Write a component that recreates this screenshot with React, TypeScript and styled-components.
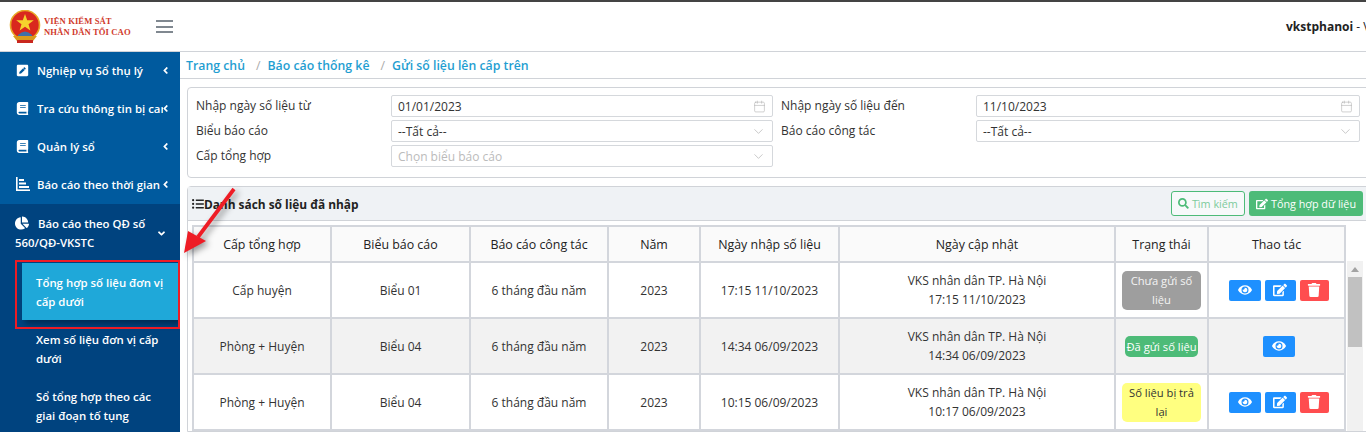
import React from 'react'
import styled, { createGlobalStyle } from 'styled-components'
import { FaAngleDown, FaAngleLeft, FaBook, FaChartPie, FaEdit, FaEye, FaPenSquare, FaSearch, FaTrash, FaListUl } from 'react-icons/fa'
import { Calendar, ChevronDown } from 'lucide-react'

const GlobalStyle = createGlobalStyle`
  html, body {
    margin: 0;
    padding: 0;
    background: #fff;
    overflow: hidden;
  }
  * { box-sizing: border-box; }
`

const App = () => {
  return (
    <Page>
      <GlobalStyle />
      <Header>
        <Brand>
          <Emblem />
          <BrandText>
            <span>VIỆN KIỂM SÁT</span>
            <span>NHÂN DÂN TỐI CAO</span>
          </BrandText>
          <Burger><i /><i /><i /></Burger>
        </Brand>
        <UserName><b>vkstphanoi</b> - VKS nhân dân TP. Hà Nội</UserName>
      </Header>

      <Body>
        <Sidebar>
          {MENU.map(item => (
            <MenuItem key={item.text}>
              <MenuIcon>{item.icon}</MenuIcon>
              <MenuText>{item.text}</MenuText>
              <MenuCaret><FaAngleLeft /></MenuCaret>
            </MenuItem>
          ))}
          <ActiveGroup>
            <GroupTitle>
              <GroupIcon><FaChartPie /></GroupIcon>
              Báo cáo theo QĐ số 560/QĐ-VKSTC
              <GroupCaret><FaAngleDown /></GroupCaret>
            </GroupTitle>
            <SubItem $active>Tổng hợp số liệu đơn vị cấp dưới</SubItem>
            <SubItem>Xem số liệu đơn vị cấp dưới</SubItem>
            <SubItem>Sổ tổng hợp theo các giai đoạn tố tụng</SubItem>
          </ActiveGroup>
        </Sidebar>

        <Main>
          <Breadcrumb>
            <Crumb>Trang chủ</Crumb>
            <Slash>/</Slash>
            <Crumb>Báo cáo thống kê</Crumb>
            <Slash>/</Slash>
            <Crumb>Gửi số liệu lên cấp trên</Crumb>
          </Breadcrumb>

          <FilterCard>
            <FieldLabel>Nhập ngày số liệu từ</FieldLabel>
            <Field>01/01/2023<Calendar size={13} strokeWidth={1} /></Field>
            <FieldLabel $indent>Nhập ngày số liệu đến</FieldLabel>
            <Field>11/10/2023<Calendar size={13} strokeWidth={1} /></Field>
            <FieldLabel>Biểu báo cáo</FieldLabel>
            <Field>--Tất cả--<ChevronDown size={15} strokeWidth={1} /></Field>
            <FieldLabel $indent>Báo cáo công tác</FieldLabel>
            <Field>--Tất cả--<ChevronDown size={15} strokeWidth={1} /></Field>
            <FieldLabel>Cấp tổng hợp</FieldLabel>
            <Field $placeholder>Chọn biểu báo cáo<ChevronDown size={15} strokeWidth={1} /></Field>
          </FilterCard>

          <Panel>
            <PanelHeader>
              <PanelTitle><FaListUl />Danh sách số liệu đã nhập</PanelTitle>
              <PanelActions>
                <OutlineButton><FaSearch />Tìm kiếm</OutlineButton>
                <GreenButton><FaEdit />Tổng hợp dữ liệu</GreenButton>
              </PanelActions>
            </PanelHeader>
            <TableArea>
              <Table>
                <colgroup>
                  {COLUMNS.map(col => <col key={col.title} style={{ width: col.width }} />)}
                </colgroup>
                <thead>
                  <tr>
                    {COLUMNS.map(col => <th key={col.title}>{col.title}</th>)}
                  </tr>
                </thead>
                <tbody>
                  {ROWS.map(row => (
                    <BodyRow key={row.created} $even={row.even}>
                      <td>{row.level}</td>
                      <td>{row.form}</td>
                      <td>{row.report}</td>
                      <td>2023</td>
                      <td>{row.created}</td>
                      <td>VKS nhân dân TP. Hà Nội<br />{row.updated}</td>
                      <td><Status $kind={row.kind}>{row.status}</Status></td>
                      <td>
                        <Actions>
                          <ActionButton $color="#1e90ff" $width={32}><FaEye /></ActionButton>
                          {row.kind !== 'sent' && (
                            <>
                              <ActionButton $color="#1e90ff" $width={31}><FaEdit /></ActionButton>
                              <ActionButton $color="#ff4d4f" $width={29}><FaTrash /></ActionButton>
                            </>
                          )}
                        </Actions>
                      </td>
                    </BodyRow>
                  ))}
                </tbody>
              </Table>
              <ScrollTrack>
                <ScrollArrow />
                <ScrollThumb />
              </ScrollTrack>
            </TableArea>
          </Panel>
        </Main>
      </Body>

      <Highlight />
      <Arrow viewBox="0 0 60 76" width="60" height="76">
        <path d="M53 4 L17 52" stroke="#ee1c25" strokeWidth="3.8" fill="none" />
        <path d="M3 68 L7 46 L25 56 Z" fill="#ee1c25" />
      </Arrow>
    </Page>
  )
}

const Emblem = () => (
  <svg width="32" height="34" viewBox="0 0 32 34">
    <circle cx="16" cy="15" r="14.5" fill="#d9281e" />
    <circle cx="16" cy="15" r="14.5" fill="none" stroke="#e8a825" strokeWidth="1.6" />
    <path d="M16 4 L18.2 10.2 L24.8 10.2 L19.5 14.2 L21.4 20.4 L16 16.7 L10.6 20.4 L12.5 14.2 L7.2 10.2 L13.8 10.2 Z" fill="#f6d32d" />
    <path d="M9 25 Q16 18 23 25 L23 27 L9 27 Z" fill="#3f6fa8" />
    <path d="M4 26 H28 L24 31 H8 Z" fill="#d99a1c" />
    <rect x="8" y="30" width="16" height="3" fill="#c9271e" />
  </svg>
)

const BarsIcon = () => (
  <svg width="14" height="14" viewBox="0 0 14 14" fill="#fff">
    <rect x="0" y="0" width="1.6" height="14" />
    <rect x="0" y="12.4" width="14" height="1.6" />
    <rect x="3" y="2" width="5" height="2" />
    <rect x="3" y="5.5" width="7" height="2" />
    <rect x="3" y="9" width="10" height="2" />
  </svg>
)

export default App

const Page = styled.div`
  position: relative;
  width: 1366px;
  height: 432px;
  overflow: hidden;
  display: flex;
  flex-direction: column;
  font-family: "Open Sans", "Noto Sans", sans-serif;
  font-size: 12px;
  color: #333;
  border-top: 2px solid #444;
`

const Header = styled.header`
  flex: none;
  height: 50px;
  display: flex;
  align-items: center;
  border-bottom: 1px solid #d0d3d8;
  white-space: nowrap;
`

const Brand = styled.div`
  width: 180px;
  flex: none;
  display: flex;
  align-items: center;
  padding-left: 9px;
  gap: 3px;
`

const BrandText = styled.div`
  display: flex;
  flex-direction: column;
  font-family: "Liberation Serif", serif;
  font-size: 8.6px;
  font-weight: bold;
  line-height: 11px;
  color: #d0392b;
  letter-spacing: 0.1px;
`

const Burger = styled.div`
  margin-left: 22px;
  width: 17px;
  display: flex;
  flex-direction: column;
  gap: 3.5px;

  i {
    display: block;
    height: 2px;
    background: #808890;
  }
`

const UserName = styled.div`
  flex: none;
  margin-left: 1106px;
  font-size: 12px;
  color: #222;
`

const Body = styled.div`
  flex: 1;
  min-height: 0;
  display: flex;
`

const Sidebar = styled.nav`
  width: 180px;
  flex: none;
  background: #005a9e;
  color: #fff;
  font-weight: 600;
  font-size: 11.4px;
  overflow: hidden;
`

const MenuItem = styled.div`
  height: 38px;
  display: flex;
  align-items: center;
  padding: 0 0 2px 16px;
  white-space: nowrap;
`

const MenuIcon = styled.span`
  width: 21px;
  flex: none;
  display: flex;
  font-size: 13px;
`

const MenuText = styled.span`
  width: 126px;
  flex: none;
  overflow: hidden;
`

const MenuCaret = styled.span`
  display: flex;
  font-size: 11px;
  margin-left: -3px;
`

const ActiveGroup = styled.div`
  background: #00437f;
  height: 230px;
`

const GroupTitle = styled.div`
  position: relative;
  padding: 11px 30px 11px 15px;
  line-height: 18px;
`

const GroupIcon = styled.span`
  display: inline-block;
  width: 23px;
  font-size: 14px;
  vertical-align: -2px;
`

const GroupCaret = styled.span`
  position: absolute;
  right: 13px;
  top: 22px;
  font-size: 11px;
`

const SubItem = styled.div<{ $active?: boolean }>`
  margin-left: 22px;
  width: 156px;
  height: 57px;
  display: flex;
  align-items: center;
  padding: 0 8px 0 14px;
  line-height: 19px;
  background: ${p => (p.$active ? '#1fa8d9' : 'transparent')};
  box-shadow: ${p => (p.$active ? '3px 4px 6px rgba(0, 0, 0, 0.35)' : 'none')};
`

const Main = styled.main`
  flex: 1;
  min-width: 0;
  overflow: hidden;
`

const Breadcrumb = styled.div`
  height: 27px;
  display: flex;
  align-items: center;
  padding-left: 6px;
  border-bottom: 1px solid #d0d3d8;
  font-size: 12.3px;
  font-weight: 600;
`

const Crumb = styled.span`
  color: #1f9ed1;
`

const Slash = styled.span`
  color: #aaa;
  font-weight: 400;
  margin: 0 7px 0 11px;
`

const FilterCard = styled.section`
  width: 1190px;
  height: 91px;
  margin: 8px 0 0 7px;
  padding: 7px 0 0 8px;
  border: 1px solid #d0d3d8;
  border-radius: 4px;
  display: grid;
  grid-template-columns: 195px 382px 203px 384px;
  grid-auto-rows: 22px;
  row-gap: 3px;
`

const FieldLabel = styled.label<{ $indent?: boolean }>`
  line-height: 22px;
  padding-left: ${p => (p.$indent ? '8px' : '0')};
`

const Field = styled.div<{ $placeholder?: boolean }>`
  display: flex;
  align-items: center;
  justify-content: space-between;
  padding: 0 6px;
  border: 1px solid #d5d8dc;
  border-radius: 2px;
  color: ${p => (p.$placeholder ? '#bbb' : '#333')};

  svg {
    color: #aaa;
  }
`

const Panel = styled.section`
  width: 1190px;
  margin: 8px 0 0 7px;
  border: 1px solid #d0d3d8;
  border-radius: 4px 4px 0 0;
`

const PanelHeader = styled.div`
  height: 34px;
  display: flex;
  align-items: center;
  justify-content: space-between;
  padding: 0 13px 0 4px;
  background: #eff2f5;
  border-bottom: 1px solid #d0d3d8;
`

const PanelTitle = styled.h2`
  margin: 0;
  font-size: 11.9px;
  font-weight: 700;
  color: #222;
  display: flex;
  align-items: center;
`

const PanelActions = styled.div`
  display: flex;
  gap: 4px;
`

const OutlineButton = styled.button`
  width: 74px;
  height: 25px;
  padding: 0;
  display: flex;
  align-items: center;
  justify-content: center;
  gap: 3px;
  font: inherit;
  font-size: 10.8px;
  color: #7ecb9d;
  background: #f7f9fa;
  border: 1px solid #4dbb78;
  border-radius: 3px;

  svg { color: #4dbb78; }
`

const GreenButton = styled.button`
  width: 114px;
  height: 25px;
  padding: 0;
  display: flex;
  align-items: center;
  justify-content: center;
  gap: 3px;
  font: inherit;
  font-size: 10.8px;
  color: #fff;
  background: #4dbb78;
  border: none;
  border-radius: 3px;

  svg { font-size: 12px; }
`

const TableArea = styled.div`
  display: flex;
  align-items: flex-start;
  margin: 4px 0 0 4px;
`

const Table = styled.table`
  table-layout: fixed;
  width: 1152px;
  flex: none;
  border-collapse: collapse;
  text-align: center;

  th, td {
    border: 2px solid #d3d6dc;
    padding: 0;
    vertical-align: middle;
  }

  th {
    height: 36px;
    font-size: 12.4px;
    font-weight: 400;
    background: #fafafa;
    color: #222;
  }

  td {
    height: 56px;
    line-height: 19px;
  }
`

const BodyRow = styled.tr<{ $even?: boolean }>`
  background: ${p => (p.$even ? '#f2f2f2' : '#fff')};
`

const STATUS_COLORS = {
  pending: { bg: '#9e9e9e', fg: '#f4f4f4' },
  sent: { bg: '#4dbb78', fg: '#fff' },
  returned: { bg: '#ffff80', fg: '#333' },
}

const Status = styled.div<{ $kind: keyof typeof STATUS_COLORS }>`
  margin: 0 auto;
  padding: ${p => (p.$kind === 'sent' ? '1px 0' : '0 3px')};
  width: ${p => (p.$kind === 'sent' ? '73px' : '79px')};
  line-height: ${p => (p.$kind === 'sent' ? '19px' : '19.5px')};
  border-radius: 5px;
  font-size: 11.2px;
  white-space: ${p => (p.$kind === 'sent' ? 'nowrap' : 'normal')};
  background: ${p => STATUS_COLORS[p.$kind].bg};
  color: ${p => STATUS_COLORS[p.$kind].fg};
`

const Actions = styled.div`
  display: flex;
  justify-content: center;
  gap: 4px;
  padding-left: 4px;
`

const ActionButton = styled.button<{ $color: string; $width: number }>`
  width: ${p => p.$width}px;
  height: 21px;
  padding: 0;
  display: flex;
  align-items: center;
  justify-content: center;
  border: none;
  border-radius: 2px;
  font-size: 14px;
  color: #fff;
  background: ${p => p.$color};
`

const ScrollTrack = styled.div`
  flex: none;
  width: 16px;
  height: 170px;
  margin: 36px 0 0 1px;
  background: #f1f1f1;
`

const ScrollArrow = styled.div`
  width: 0;
  margin: 6px auto 5px;
  border: 4px solid transparent;
  border-top: 0;
  border-bottom: 5px solid #a3a3a3;
`

const ScrollThumb = styled.div`
  width: 14px;
  height: 70px;
  margin: 0 auto;
  background: #c1c1c1;
`

const Highlight = styled.div`
  position: absolute;
  left: 15px;
  top: 258px;
  width: 165px;
  height: 69px;
  border: 2px solid #ee1c25;
`

const Arrow = styled.svg`
  position: absolute;
  left: 181px;
  top: 183px;
  filter: drop-shadow(3px 3px 3px rgba(0, 0, 0, 0.4));
`

const MENU = [
  { text: 'Nghiệp vụ Sổ thụ lý', icon: <FaPenSquare /> },
  { text: 'Tra cứu thông tin bị can', icon: <FaBook /> },
  { text: 'Quản lý sổ', icon: <FaBook /> },
  { text: 'Báo cáo theo thời gian', icon: <BarsIcon /> },
]

const COLUMNS = [
  { title: 'Cấp tổng hợp', width: 138 },
  { title: 'Biểu báo cáo', width: 139 },
  { title: 'Báo cáo công tác', width: 138 },
  { title: 'Năm', width: 92 },
  { title: 'Ngày nhập số liệu', width: 139 },
  { title: 'Ngày cập nhật', width: 276 },
  { title: 'Trạng thái', width: 93 },
  { title: 'Thao tác', width: 137 },
]

const ROWS = [
  { level: 'Cấp huyện', form: 'Biểu 01', report: '6 tháng đầu năm', created: '17:15 11/10/2023', updated: '17:15 11/10/2023', status: 'Chưa gửi số liệu', kind: 'pending' as const, even: false },
  { level: 'Phòng + Huyện', form: 'Biểu 04', report: '6 tháng đầu năm', created: '14:34 06/09/2023', updated: '14:34 06/09/2023', status: 'Đã gửi số liệu', kind: 'sent' as const, even: true },
  { level: 'Phòng + Huyện', form: 'Biểu 04', report: '6 tháng đầu năm', created: '10:15 06/09/2023', updated: '10:17 06/09/2023', status: 'Số liệu bị trả lại', kind: 'returned' as const, even: false },
]
